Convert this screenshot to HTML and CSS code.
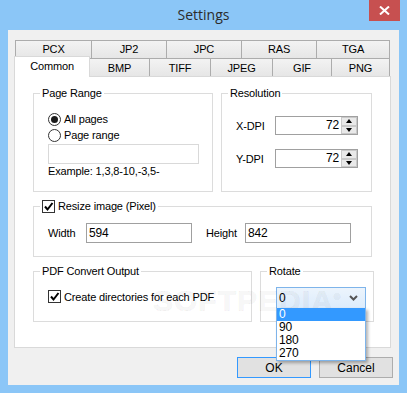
FILE: index.html
```html
<!DOCTYPE html>
<html lang="en">
<head>
    <meta charset="UTF-8">
    <title>Settings</title>
    <link rel="stylesheet" href="styles.css">
</head>
<body>

    <!-- Window -->
    <div class="window">
        <div class="titlebar">
            <span></span>
            <span class="title">Settings</span>
            <span class="close-btn">
                <svg width="11" height="9" viewBox="0 0 11 9">
                    <path d="M1 0.5 L10 8.5 M10 0.5 L1 8.5" stroke="#fff" stroke-width="2"/>
                </svg>
            </span>
        </div>

        <div class="client">
            <!-- Tabs -->
            <div class="tabs">
                <div class="tab-row back">
                    <div class="tab" style="width:77px">PCX</div>
                    <div class="tab" style="width:76px">JP2</div>
                    <div class="tab" style="width:76px">JPC</div>
                    <div class="tab" style="width:76px">RAS</div>
                    <div class="tab" style="width:74px">TGA</div>
                </div>
                <div class="tab-row front">
                    <div class="tab selected" style="width:76px">Common</div>
                    <div class="tab" style="width:61px">BMP</div>
                    <div class="tab" style="width:62px">TIFF</div>
                    <div class="tab" style="width:63px">JPEG</div>
                    <div class="tab" style="width:60px">GIF</div>
                    <div class="tab" style="width:59px">PNG</div>
                </div>
            </div>

            <!-- Common page -->
            <div class="tab-page">
                <div class="row">
                    <fieldset class="group page-range">
                        <legend>Page Range</legend>
                        <div class="group-body">
                            <div class="option"><span class="radio checked"></span>All pages</div>
                            <div class="option"><span class="radio"></span>Page range</div>
                            <div class="textbox disabled range-box"></div>
                            <div class="hint">Example: 1,3,8-10,-3,5-</div>
                        </div>
                    </fieldset>

                    <fieldset class="group resolution">
                        <legend>Resolution</legend>
                        <div class="group-body">
                            <div class="dpi-row">
                                <span class="dpi-label">X-DPI</span>
                                <div class="spin">
                                    <span class="spin-value">72</span>
                                    <span class="spin-btns"><span class="spin-up"></span><span class="spin-down"></span></span>
                                </div>
                            </div>
                            <div class="dpi-row">
                                <span class="dpi-label">Y-DPI</span>
                                <div class="spin">
                                    <span class="spin-value">72</span>
                                    <span class="spin-btns"><span class="spin-up"></span><span class="spin-down"></span></span>
                                </div>
                            </div>
                        </div>
                    </fieldset>
                </div>

                <div class="row">
                    <fieldset class="group resize">
                        <legend class="check-legend">
                            <span class="checkbox">
                                <svg width="11" height="11" viewBox="0 0 11 11">
                                    <path d="M2 5.5 L4.5 8.5 L9.5 2" stroke="#000" stroke-width="2" fill="none"/>
                                </svg>
                            </span>Resize image (Pixel)
                        </legend>
                        <div class="group-body size-row">
                            <span class="size-label">Width</span>
                            <div class="textbox size-box">594</div>
                            <span class="size-label height-label">Height</span>
                            <div class="textbox size-box">842</div>
                        </div>
                    </fieldset>
                </div>

                <div class="row">
                    <fieldset class="group pdf-output">
                        <legend>PDF Convert Output</legend>
                        <div class="group-body">
                            <div class="option check-option">
                                <span class="checkbox">
                                    <svg width="11" height="11" viewBox="0 0 11 11">
                                        <path d="M2 5.5 L4.5 8.5 L9.5 2" stroke="#000" stroke-width="2" fill="none"/>
                                    </svg>
                                </span>Create directories for each PDF
                            </div>
                        </div>
                    </fieldset>

                    <fieldset class="group rotate">
                        <legend>Rotate</legend>
                        <div class="group-body">
                            <div class="combo">
                                <span>0</span>
                                <svg width="9" height="6" viewBox="0 0 9 6">
                                    <path d="M1 1 L4.5 4.5 L8 1" stroke="#555" stroke-width="2" fill="none"/>
                                </svg>
                                <div class="combo-list">
                                    <div class="combo-item active">0</div>
                                    <div class="combo-item">90</div>
                                    <div class="combo-item">180</div>
                                    <div class="combo-item">270</div>
                                </div>
                            </div>
                        </div>
                    </fieldset>
                </div>

                <div class="watermark">SOFTPEDIA<sup>®</sup></div>
            </div>

            <!-- Dialog buttons -->
            <div class="buttons">
                <button class="btn default">OK</button>
                <button class="btn">Cancel</button>
            </div>
        </div>
    </div>

</body>
</html>
```

FILE: styles.css
```css
/* General Reset */
body, fieldset, legend, button {
    margin: 0;
    padding: 0;
}
* {
    box-sizing: border-box;
}
body {
    width: 407px;
    height: 393px;
    background-color: #8bc6f7;
    font-family: "Liberation Sans", Arial, sans-serif;
    font-size: 11px;
    letter-spacing: -0.15px;
    color: #000;
    overflow: hidden;
}

/* Title bar */
.titlebar {
    height: 30px;
    display: grid;
    grid-template-columns: 1fr auto 1fr;
}
.title {
    font-family: "Open Sans", "Liberation Sans", sans-serif;
    font-size: 14px;
    letter-spacing: 0;
    color: #2b2b2b;
    line-height: 30px;
}
.close-btn {
    justify-self: end;
    width: 31px;
    height: 21px;
    margin-right: 7px;
    background-color: #c75050;
    display: flex;
    justify-content: center;
    align-items: center;
}

/* Client area */
.client {
    margin: 0 8px;
    height: 355px;
    background-color: #f0f0f0;
    padding: 10px 6px 7px 6px;
}

/* Tabs */
.tabs {
    width: 377px;
}
.tab-row {
    display: flex;
    height: 18px;
}
.tab-row.back {
    padding-left: 1px;
}
.tab {
    height: 18px;
    border: 1px solid #acacac;
    border-bottom: none;
    background: linear-gradient(#f3f3f3, #e6e6e6);
    text-align: center;
    line-height: 17px;
}
.tab + .tab {
    margin-left: -1px;
}
.tab-row.front .tab {
    line-height: 18px;
}
.tab.selected {
    height: 21px;
    margin-top: -2px;
    margin-bottom: -1px;
    background: #fff;
    z-index: 2;
    line-height: 19px;
    border-color: #d9d9d9;
}

.tab-page {
    position: relative;
    width: 377px;
    height: 272px;
    border: 1px solid #d9d9d9;
    background-color: #fff;
    padding: 10px 0 0 18px;
}

/* Group boxes */
.row {
    display: flex;
    gap: 8px;
}
.row + .row {
    margin-top: 8px;
}
.row:last-of-type {
    margin-top: 9px;
    gap: 6px;
}
.group {
    border: 1px solid #dcdcdc;
    min-width: 0;
    padding: 0;
}
.group legend {
    margin-left: 6px;
    padding: 0 2px;
    line-height: 13px;
    height: 13px;
}
.group-body {
    padding-left: 14px;
}
.page-range {
    width: 180px;
    height: 105px;
}
.resolution {
    width: 151px;
    height: 105px;
}
.resize {
    width: 339px;
    height: 57px;
}
.pdf-output {
    width: 219px;
    height: 57px;
}
.rotate {
    width: 114px;
    height: 57px;
}

/* Radios and checkboxes */
.option {
    display: flex;
    align-items: center;
    height: 16px;
}
.page-range .group-body {
    padding-top: 11px;
}
.radio {
    width: 13px;
    height: 13px;
    border: 1px solid #333;
    border-radius: 50%;
    background-color: #fff;
    margin-right: 3px;
    display: flex;
    justify-content: center;
    align-items: center;
}
.radio.checked::after {
    content: "";
    width: 7px;
    height: 7px;
    border-radius: 50%;
    background-color: #1b1b1b;
}
.checkbox {
    width: 13px;
    height: 13px;
    border: 1px solid #333;
    background-color: #fff;
    margin-right: 3px;
    display: flex;
    justify-content: center;
    align-items: center;
}
.check-legend {
    display: flex;
    align-items: center;
}
.check-option {
    margin-top: 12px;
    height: 13px;
}

/* Text boxes */
.textbox {
    height: 20px;
    border: 1px solid #a0a0a0;
    background-color: #fff;
    padding-left: 2px;
    line-height: 18px;
    font-size: 12px;
}
.textbox.disabled {
    border-color: #d9d9d9;
}
.range-box {
    width: 151px;
    margin-top: 1px;
}
.hint {
    line-height: 13px;
    margin-top: 1px;
}

/* Resolution */
.dpi-row {
    display: flex;
    align-items: center;
    margin-top: 16px;
}
.dpi-row + .dpi-row {
    margin-top: 14px;
}
.dpi-label {
    width: 39px;
}
.spin {
    width: 83px;
    height: 19px;
    border: 1px solid #a0a0a0;
    display: flex;
}
.spin-value {
    flex: 1;
    text-align: right;
    padding-right: 2px;
    line-height: 17px;
    font-size: 12px;
}
.spin-btns {
    width: 16px;
    display: flex;
    flex-direction: column;
}
.spin-up, .spin-down {
    flex: 1;
    background-color: #e9e9e9;
    border: 1px solid #c9c9c9;
    display: flex;
    justify-content: center;
    align-items: center;
}
.spin-up::after {
    content: "";
    border-left: 3px solid transparent;
    border-right: 3px solid transparent;
    border-bottom: 4px solid #000;
}
.spin-down::after {
    content: "";
    border-left: 3px solid transparent;
    border-right: 3px solid transparent;
    border-top: 4px solid #000;
}

/* Resize */
.size-row {
    display: flex;
    align-items: center;
    margin-top: 10px;
}
.size-label {
    width: 38px;
}
.height-label {
    width: 39px;
    margin-left: 14px;
}
.size-box {
    width: 106px;
}

/* Rotate combo */
.rotate .group-body {
    padding-left: 15px;
    padding-top: 9px;
}
.combo {
    position: relative;
    width: 90px;
    height: 22px;
    border: 1px solid #7eb4ea;
    background: linear-gradient(#ecf4fc, #dcecfc);
    display: flex;
    justify-content: space-between;
    align-items: center;
    padding: 0 7px 0 2px;
    font-size: 12px;
}
.combo-list {
    position: absolute;
    top: 100%;
    left: -1px;
    width: 90px;
    border: 1px solid #7eb4ea;
    border-top: none;
    background-color: #fff;
    box-shadow: 2px 2px 3px rgba(0, 0, 0, 0.3);
    z-index: 5;
}
.combo-item {
    height: 13px;
    line-height: 13px;
    padding-left: 2px;
}
.combo-item.active {
    background-color: #3399ff;
    color: #fff;
}

/* Watermark */
.watermark {
    position: absolute;
    left: 138px;
    top: 207px;
    font-size: 30px;
    font-weight: bold;
    letter-spacing: 1px;
    color: rgba(0, 0, 0, 0.03);
    -webkit-text-stroke: 1px rgba(0, 0, 0, 0.05);
}
.watermark sup {
    font-size: 9px;
}

/* Buttons */
.buttons {
    display: flex;
    justify-content: flex-end;
    gap: 8px;
    margin-top: 9px;
}
.btn {
    width: 74px;
    height: 21px;
    border: 1px solid #adadad;
    background-color: #e1e1e1;
    font-family: "Liberation Sans", Arial, sans-serif;
    font-size: 12px;
    color: #000;
}
.btn.default {
    border-color: #3399ff;
}
```
